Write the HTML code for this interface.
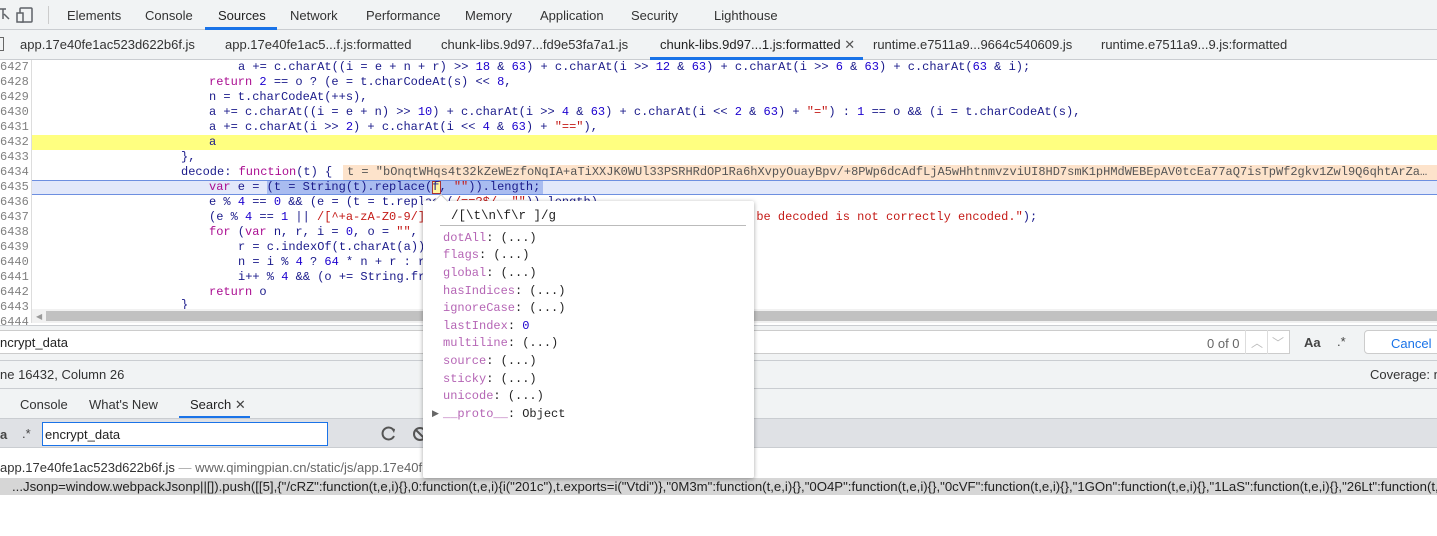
<!DOCTYPE html>
<html><head><meta charset="utf-8"><style>
*{margin:0;padding:0;box-sizing:border-box}
body{width:1437px;height:536px;overflow:hidden;background:#fff;font-family:"Liberation Sans",sans-serif;font-size:13px;color:#333;position:relative}
.a{position:absolute;white-space:pre}
.m{font-family:"Liberation Mono",monospace;font-size:12px}
.k{color:#aa0d91}.n{color:#1c00cf}.s{color:#c41a16}.p{color:#881280}.v{color:#1a1a8a}
.ln{position:absolute;left:0;width:28px;text-align:right;color:#808080;font-family:"Liberation Mono",monospace;font-size:12px}
.prop{position:absolute;left:443px;font-family:"Liberation Mono",monospace;font-size:12px;color:#222}
.prop b{font-weight:normal;color:#b565b5}
</style></head><body>
<div class="a" style="left:0;top:0;width:1437px;height:30px;background:#f1f3f4;border-bottom:1px solid #cacdd1"></div>
<svg class="a" style="left:0;top:6px" width="40" height="18"><path d="M0 3h6M3 3v10M4 8l5 5" stroke="#5f6368" stroke-width="1.5" fill="none"/><rect x="20" y="2" width="12" height="14" rx="1" stroke="#5f6368" stroke-width="1.5" fill="none"/><rect x="17" y="7" width="6" height="9" fill="#f1f3f4" stroke="#5f6368" stroke-width="1.5"/></svg>
<div class="a" style="left:48px;top:6px;width:1px;height:18px;background:#ccc"></div>
<div class="a" style="left:67px;top:8px">Elements</div>
<div class="a" style="left:145px;top:8px">Console</div>
<div class="a" style="left:218px;top:8px;color:#222">Sources</div>
<div class="a" style="left:205px;top:27px;width:72px;height:3px;background:#1a73e8"></div>
<div class="a" style="left:290px;top:8px">Network</div>
<div class="a" style="left:366px;top:8px">Performance</div>
<div class="a" style="left:465px;top:8px">Memory</div>
<div class="a" style="left:540px;top:8px">Application</div>
<div class="a" style="left:631px;top:8px">Security</div>
<div class="a" style="left:714px;top:8px">Lighthouse</div>
<div class="a" style="left:0;top:30px;width:1437px;height:30px;background:#f1f3f4;border-bottom:1px solid #cacdd1"></div>
<div class="a" style="left:0;top:37px;width:4px;height:14px;border:1px solid #666;border-left:none"></div>
<div class="a" style="left:20px;top:37px">app.17e40fe1ac523d622b6f.js</div>
<div class="a" style="left:225px;top:37px">app.17e40fe1ac5...f.js:formatted</div>
<div class="a" style="left:441px;top:37px">chunk-libs.9d97...fd9e53fa7a1.js</div>
<div class="a" style="left:660px;top:37px;color:#222">chunk-libs.9d97...1.js:formatted <span style="color:#555">✕</span></div>
<div class="a" style="left:650px;top:57px;width:213px;height:3px;background:#1a73e8"></div>
<div class="a" style="left:873px;top:37px">runtime.e7511a9...9664c540609.js</div>
<div class="a" style="left:1101px;top:37px">runtime.e7511a9...9.js:formatted</div>
<div class="a" style="left:31px;top:60px;width:1px;height:263px;background:#ddd"></div>
<div class="a" style="left:32px;top:135px;width:1405px;height:15px;background:#ffff80"></div>
<div class="a" style="left:32px;top:180px;width:1405px;height:15px;background:#e2e8fa;border-top:1px solid #6d8fe0;border-bottom:1px solid #6d8fe0"></div>
<div class="a" style="left:267px;top:181px;width:276px;height:13px;background:#a9bcf0"></div>
<div class="a" style="left:432px;top:181px;width:9px;height:13px;background:#fff5a0;border:1px solid #a33"></div>
<div class="a" style="left:343px;top:165px;width:1094px;height:15px;background:#fde3cb"></div>
<div class="ln" style="top:60px">6427</div><div class="ln" style="top:75px">6428</div><div class="ln" style="top:90px">6429</div><div class="ln" style="top:105px">6430</div><div class="ln" style="top:120px">6431</div><div class="ln" style="top:135px">6432</div><div class="ln" style="top:150px">6433</div><div class="ln" style="top:165px">6434</div><div class="ln" style="top:180px">6435</div><div class="ln" style="top:195px">6436</div><div class="ln" style="top:210px">6437</div><div class="ln" style="top:225px">6438</div><div class="ln" style="top:240px">6439</div><div class="ln" style="top:255px">6440</div><div class="ln" style="top:270px">6441</div><div class="ln" style="top:285px">6442</div><div class="ln" style="top:300px">6443</div><div class="ln" style="top:315px">6444</div>
<div class="a m v" style="left:238px;top:60px">a += c.charAt((i = e + n + r) &gt;&gt; <span class="n">18</span> &amp; <span class="n">63</span>) + c.charAt(i &gt;&gt; <span class="n">12</span> &amp; <span class="n">63</span>) + c.charAt(i &gt;&gt; <span class="n">6</span> &amp; <span class="n">63</span>) + c.charAt(<span class="n">63</span> &amp; i);</div>
<div class="a m v" style="left:209px;top:75px"><span class="k">return</span> <span class="n">2</span> == o ? (e = t.charCodeAt(s) &lt;&lt; <span class="n">8</span>,</div>
<div class="a m v" style="left:209px;top:90px">n = t.charCodeAt(++s),</div>
<div class="a m v" style="left:209px;top:105px">a += c.charAt((i = e + n) &gt;&gt; <span class="n">10</span>) + c.charAt(i &gt;&gt; <span class="n">4</span> &amp; <span class="n">63</span>) + c.charAt(i &lt;&lt; <span class="n">2</span> &amp; <span class="n">63</span>) + <span class="s">"="</span>) : <span class="n">1</span> == o &amp;&amp; (i = t.charCodeAt(s),</div>
<div class="a m v" style="left:209px;top:120px">a += c.charAt(i &gt;&gt; <span class="n">2</span>) + c.charAt(i &lt;&lt; <span class="n">4</span> &amp; <span class="n">63</span>) + <span class="s">"=="</span>),</div>
<div class="a m v" style="left:209px;top:135px">a</div>
<div class="a m v" style="left:181px;top:150px">},</div>
<div class="a m v" style="left:181px;top:165px">decode: <span class="k">function</span>(t) {</div>
<div class="a m" style="left:347px;top:165px;color:#555">t = "bOnqtWHqs4t32kZeWEzfoNqIA+aTiXXJK0WUl33PSRHRdOP1Ra6hXvpyOuayBpv/+8PWp6dcAdfLjA5wHhtnmvzviUI8HD7smK1pHMdWEBEpAV0tcEa77aQ7isTpWf2gkv1Zwl9Q6qhtArZa…</div>
<div class="a m v" style="left:209px;top:180px"><span class="k">var</span> e = (t = String(t).replace(f, <span class="s">""</span>)).length;</div>
<div class="a m v" style="left:209px;top:195px">e % <span class="n">4</span> == <span class="n">0</span> &amp;&amp; (e = (t = t.replace(<span class="s">/==?$/</span>, <span class="s">""</span>)).length),</div>
<div class="a m v" style="left:209px;top:210px">(e % <span class="n">4</span> == <span class="n">1</span> || <span class="s">/[^+a-zA-Z0-9/]/</span>.test(t)) &amp;&amp; r(<span class="s">"'atob' failed: The string to be decoded is not correctly encoded."</span>);</div>
<div class="a m v" style="left:209px;top:225px"><span class="k">for</span> (<span class="k">var</span> n, r, i = <span class="n">0</span>, o = <span class="s">""</span>, a = <span class="n">0</span>; a &lt; t.length; a++)</div>
<div class="a m v" style="left:238px;top:240px">r = c.indexOf(t.charAt(a)),</div>
<div class="a m v" style="left:238px;top:255px">n = i % <span class="n">4</span> ? <span class="n">64</span> * n + r : r,</div>
<div class="a m v" style="left:238px;top:270px">i++ % <span class="n">4</span> &amp;&amp; (o += String.fromCharCode(<span class="n">255</span> &amp; n &gt;&gt; (-<span class="n">2</span> * i &amp; <span class="n">6</span>)));</div>
<div class="a m v" style="left:209px;top:285px"><span class="k">return</span> o</div>
<div class="a m v" style="left:181px;top:298px">}</div>
<div class="a" style="left:32px;top:309px;width:1405px;height:14px;background:#f1f1f1"></div>
<div class="a" style="left:46px;top:311px;width:1391px;height:10px;background:#c1c1c1"></div>
<div class="a" style="left:36px;top:312px;font-size:8px;color:#999">◀</div>
<div class="a" style="left:0;top:325px;width:1437px;height:35px;background:#f1f3f4;border-top:1px solid #cacdd1"></div>
<div class="a" style="left:0;top:330px;width:1290px;height:24px;background:#fff;border:1px solid #ccc;border-left:none"></div>
<div class="a" style="left:0;top:335px;color:#222">ncrypt_data</div>
<div class="a" style="left:1207px;top:336px;color:#666">0 of 0</div>
<div class="a" style="left:1245px;top:330px;width:1px;height:24px;background:#ddd"></div>
<div class="a" style="left:1267px;top:330px;width:1px;height:24px;background:#ddd"></div>
<div class="a" style="left:1251px;top:334px;color:#bbb;font-size:12px">︿</div>
<div class="a" style="left:1272px;top:334px;color:#bbb;font-size:12px">﹀</div>
<div class="a" style="left:1304px;top:335px;font-weight:bold;color:#444">Aa</div>
<div class="a" style="left:1337px;top:334px;color:#444">.*</div>
<div class="a" style="left:1364px;top:330px;width:80px;height:24px;background:#fff;border:1px solid #ccc;border-radius:4px"></div>
<div class="a" style="left:1391px;top:336px;color:#1a73e8">Cancel</div>
<div class="a" style="left:0;top:360px;width:1437px;height:29px;background:#f1f3f4;border-top:1px solid #cacdd1;border-bottom:1px solid #cacdd1"></div>
<div class="a" style="left:0;top:367px">ne 16432, Column 26</div>
<div class="a" style="left:1370px;top:367px">Coverage: n</div>
<div class="a" style="left:0;top:389px;width:1437px;height:29px;background:#f1f3f4"></div>
<div class="a" style="left:20px;top:397px">Console</div>
<div class="a" style="left:89px;top:397px">What's New</div>
<div class="a" style="left:190px;top:397px;color:#222">Search <span style="color:#444">✕</span></div>
<div class="a" style="left:179px;top:416px;width:71px;height:2px;background:#1a73e8"></div>
<div class="a" style="left:0;top:418px;width:1437px;height:30px;background:#dfe1e5;border-top:1px solid #cacdd1;border-bottom:1px solid #cacdd1"></div>
<div class="a" style="left:0;top:427px;font-weight:bold;color:#444">a</div>
<div class="a" style="left:22px;top:426px;color:#444">.*</div>
<div class="a" style="left:42px;top:422px;width:286px;height:24px;background:#fff;border:1px solid #1a73e8"></div>
<div class="a" style="left:45px;top:427px;color:#222">encrypt_data</div>
<svg class="a" style="left:380px;top:425px" width="50" height="18"><path d="M14 6A6 6 0 1 0 14 11" stroke="#555" stroke-width="2" fill="none"/><path d="M11 3l4 1-1 4z" fill="#555"/><circle cx="40" cy="9" r="6" stroke="#555" stroke-width="2" fill="none"/><path d="M36 5l8 8" stroke="#555" stroke-width="2"/></svg>
<div class="a" style="left:0;top:460px">app.17e40fe1ac523d622b6f.js <span style="color:#aaa">—</span> <span style="color:#666">www.qimingpian.cn/static/js/app.17e40f</span></div>
<div class="a" style="left:0;top:478px;width:1437px;height:17px;background:#d6d6d6"></div>
<div class="a" style="left:12px;top:479px;color:#222;font-size:13.2px">...Jsonp=window.webpackJsonp||[]).push([[5],{"/cRZ":function(t,e,i){},0:function(t,e,i){i("201c"),t.exports=i("Vtdi")},"0M3m":function(t,e,i){},"0O4P":function(t,e,i){},"0cVF":function(t,e,i){},"1GOn":function(t,e,i){},"1LaS":function(t,e,i){},"26Lt":function(t,e,i){}</div>
<div class="a" style="left:423px;top:201px;width:331px;height:277px;background:#fff;box-shadow:0 1px 5px rgba(0,0,0,.35);border-radius:2px"></div>
<div class="a" style="left:436px;top:196px;width:10px;height:10px;background:#fff;transform:rotate(45deg);border-left:1px solid #ccc;border-top:1px solid #ccc"></div>
<div class="a m" style="left:451px;top:209px;color:#222;font-size:12.5px">/[\t\n\f\r ]/g</div>
<div class="a" style="left:440px;top:225px;width:306px;height:1px;background:#bbb"></div>
<div class="prop" style="top:231px"><b>dotAll</b>: (...)</div>
<div class="prop" style="top:248px"><b>flags</b>: (...)</div>
<div class="prop" style="top:266px"><b>global</b>: (...)</div>
<div class="prop" style="top:284px"><b>hasIndices</b>: (...)</div>
<div class="prop" style="top:301px"><b>ignoreCase</b>: (...)</div>
<div class="prop" style="top:319px"><b>lastIndex</b>: <span style="color:#1c00cf">0</span></div>
<div class="prop" style="top:336px"><b>multiline</b>: (...)</div>
<div class="prop" style="top:354px"><b>source</b>: (...)</div>
<div class="prop" style="top:372px"><b>sticky</b>: (...)</div>
<div class="prop" style="top:389px"><b>unicode</b>: (...)</div>
<div class="prop" style="top:407px"><b>__proto__</b>: Object</div>
<div class="a" style="left:432px;top:408px;font-size:9px;color:#666">▶</div>
</body></html>
